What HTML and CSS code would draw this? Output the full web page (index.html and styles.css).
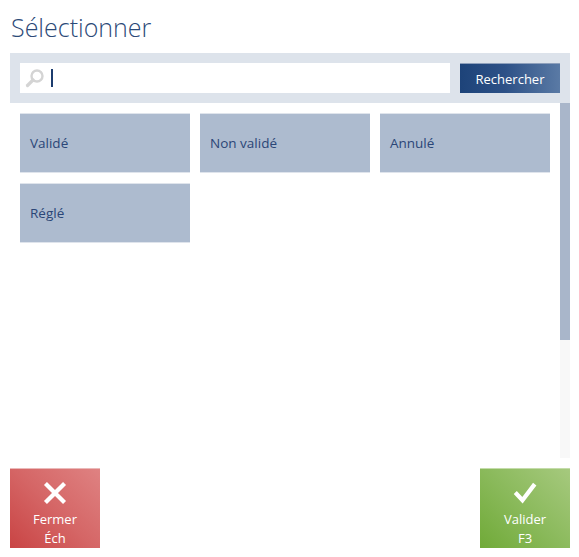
FILE: index.html
```html
<!DOCTYPE html>
<html>
<head>
<meta charset="utf-8">
<link rel="stylesheet" href="styles.css">
</head>
<body>
<div class="page">
  <h1 class="title">Sélectionner</h1>
  <div class="search-band">
    <div class="search-input">
      <svg class="search-icon" width="20" height="20" viewBox="0 0 20 20">
        <circle cx="12" cy="8" r="5.5" fill="none" stroke="#d4d4d4" stroke-width="2.4"/>
        <line x1="8" y1="12" x2="2.5" y2="17.5" stroke="#d4d4d4" stroke-width="3.2" stroke-linecap="round"/>
      </svg>
      <span class="caret"></span>
    </div>
    <button class="search-btn">Rechercher</button>
  </div>
  <div class="content">
    <div class="tiles">
      <div class="tile">Validé</div>
      <div class="tile">Non validé</div>
      <div class="tile">Annulé</div>
      <div class="tile">Réglé</div>
    </div>
    <div class="scrollbar"><div class="thumb"></div></div>
  </div>
  <div class="footer">
    <button class="action close">
      <svg width="26" height="26" viewBox="0 0 26 26">
        <path d="M3.5 3.5 L22.5 22.5 M22.5 3.5 L3.5 22.5" stroke="#fff" stroke-width="5" stroke-linecap="square"/>
      </svg>
      <span>Fermer</span>
      <span>Éch</span>
    </button>
    <button class="action ok">
      <svg width="28" height="26" viewBox="0 0 28 26">
        <path d="M2.5 12.5 L11 21.5 L25.5 2.5" fill="none" stroke="#fff" stroke-width="5"/>
      </svg>
      <span>Valider</span>
      <span>F3</span>
    </button>
  </div>
</div>
</body>
</html>
```

FILE: styles.css
```css
* { box-sizing: border-box; }
html, body { margin: 0; padding: 0; background: #fff; }
body { font-family: "Open Sans", "Noto Sans", sans-serif; }
.page {
  width: 579px;
  height: 557px;
  padding: 0 9px 0 10px;
  display: flex;
  flex-direction: column;
}
.title {
  margin: 0;
  height: 53px;
  padding: 10px 0 0 1px;
  font-size: 25px;
  font-weight: 300;
  color: #2c4a78;
  line-height: 34px;
  letter-spacing: 0;
}
.search-band {
  height: 50px;
  background: #dde3eb;
  padding: 10px;
  display: flex;
  gap: 10px;
}
.search-input {
  flex: 1;
  background: #fff;
  display: flex;
  align-items: center;
  padding-left: 5px;
}
.search-icon { display: block; }
.caret {
  width: 2px;
  height: 18px;
  background: #1c3c6e;
  margin-left: 6px;
}
.search-btn {
  width: 100px;
  border: none;
  border-top: 1px solid #8ea0bc;
  background: linear-gradient(90deg, #1d4379 0%, #2d5187 45%, #5a7aa5 100%);
  color: #fff;
  font-family: inherit;
  font-size: 13px;
  padding: 0;
}
.content {
  height: 355px;
  display: flex;
}
.tiles {
  flex: 1;
  padding: 10px;
  display: grid;
  grid-template-columns: repeat(3, 170px);
  grid-auto-rows: 60px;
  gap: 10px;
  align-content: start;
}
.tile {
  background: #adbbcf;
  border-top: 1px solid #dfe4ec;
  border-bottom: 1px solid #dfe4ec;
  color: #2b4677;
  font-size: 13.5px;
  display: flex;
  align-items: center;
  padding: 0 10px 1px;
}
.scrollbar {
  width: 10px;
  background: #f8f8f8;
}
.thumb {
  height: 237px;
  background: #a9b6ca;
}
.footer {
  margin-top: 10px;
  display: flex;
  justify-content: space-between;
}
.action {
  width: 90px;
  height: 80px;
  border: none;
  padding: 13px 0 0;
  display: flex;
  flex-direction: column;
  align-items: center;
  color: #fff;
  font-family: inherit;
  font-size: 13px;
  line-height: 19px;
}
.action svg { display: block; margin-bottom: 6px; }
.close {
  background: linear-gradient(45deg, #c94444 0%, #d56666 50%, #df8282 100%);
  border-top: 1px solid #eab9b9;
}
.ok {
  background: linear-gradient(45deg, #70aa38 0%, #8bba5c 50%, #a6c97e 100%);
  border-top: 1px solid #c4dcaa;
}
```
